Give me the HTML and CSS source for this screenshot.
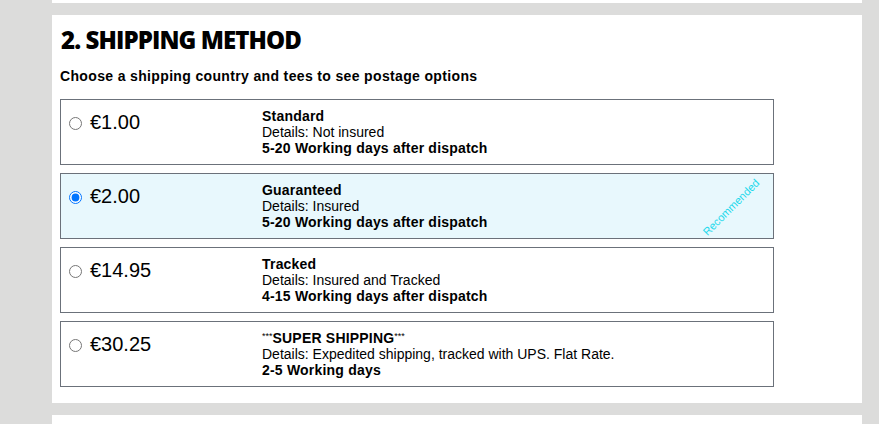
FILE: index.html
```html
<!DOCTYPE html>
<html lang="en">

<head>
    <meta charset="UTF-8" />
    <title>Shipping Method</title>
    <link rel="stylesheet" href="styles.css">
</head>

<body>
    <div class="panel panel-prev"></div>

    <div class="panel">
        <h2>2. SHIPPING METHOD</h2>
        <p class="hint">Choose a shipping country and tees to see postage options</p>

        <div class="options">
            <label class="option">
                <span class="price"><input type="radio" name="shipping"> €1.00</span>
                <span class="info">
                    <strong>Standard</strong>
                    <span>Details: Not insured</span>
                    <strong>5-20 Working days after dispatch</strong>
                </span>
            </label>

            <label class="option selected">
                <span class="price"><input type="radio" name="shipping" checked> €2.00</span>
                <span class="info">
                    <strong>Guaranteed</strong>
                    <span>Details: Insured</span>
                    <strong>5-20 Working days after dispatch</strong>
                </span>
                <span class="badge">Recommended</span>
            </label>

            <label class="option">
                <span class="price"><input type="radio" name="shipping"> €14.95</span>
                <span class="info">
                    <strong>Tracked</strong>
                    <span>Details: Insured and Tracked</span>
                    <strong>4-15 Working days after dispatch</strong>
                </span>
            </label>

            <label class="option">
                <span class="price"><input type="radio" name="shipping"> €30.25</span>
                <span class="info">
                    <span><span class="stars">***</span><strong>SUPER SHIPPING</strong><span class="stars">***</span></span>
                    <span>Details: Expedited shipping, tracked with UPS. Flat Rate.</span>
                    <strong>2-5 Working days</strong>
                </span>
            </label>
        </div>
    </div>

    <div class="panel panel-next"></div>
</body>

</html>
```

FILE: styles.css
```css
body {
    margin: 0;
    padding: 0;
    background-color: #dcdcdb;
    font-family: "Liberation Sans", Arial, sans-serif;
    color: #000;
}

.panel {
    width: 810px;
    margin-left: 52px;
    background: white;
    padding: 10px 8px 16px 8px;
    box-sizing: border-box;
}

.panel-prev {
    height: 3px;
    padding: 0;
    margin-bottom: 12px;
}

.panel-next {
    height: 20px;
    padding: 0;
    margin-top: 12px;
}

h2 {
    font-family: "Open Sans", sans-serif;
    font-weight: 800;
    font-size: 24px;
    line-height: 30px;
    margin: 0 0 0 1px;
    letter-spacing: -0.9px;
}

.hint {
    font-size: 14px;
    font-weight: bold;
    line-height: 16px;
    letter-spacing: 0.35px;
    margin: 13px 0 15px 0;
}

.options {
    display: flex;
    flex-direction: column;
    gap: 8px;
    width: 714px;
}

.option {
    position: relative;
    display: flex;
    align-items: flex-start;
    border: 1px solid #6b717a;
    padding: 8px 0;
    font-size: 14px;
    line-height: 16px;
    overflow: hidden;
    cursor: pointer;
}

.option.selected {
    background-color: #e8f8fd;
}

.price {
    display: flex;
    align-items: center;
    width: 201px;
    font-size: 20px;
    line-height: 24px;
    margin-top: 2px;
    white-space: nowrap;
}

.price input {
    margin: 2px 8px 0 8px;
    width: 13px;
    height: 13px;
}

.info {
    display: flex;
    flex-direction: column;
}

.info strong {
    letter-spacing: 0.2px;
}

.stars {
    font-size: 9px;
    vertical-align: top;
    line-height: 12px;
}

.badge {
    position: absolute;
    right: 4px;
    bottom: 24px;
    font-size: 11px;
    line-height: 13px;
    color: #22d8ec;
    transform: rotate(-45deg);
}
```
